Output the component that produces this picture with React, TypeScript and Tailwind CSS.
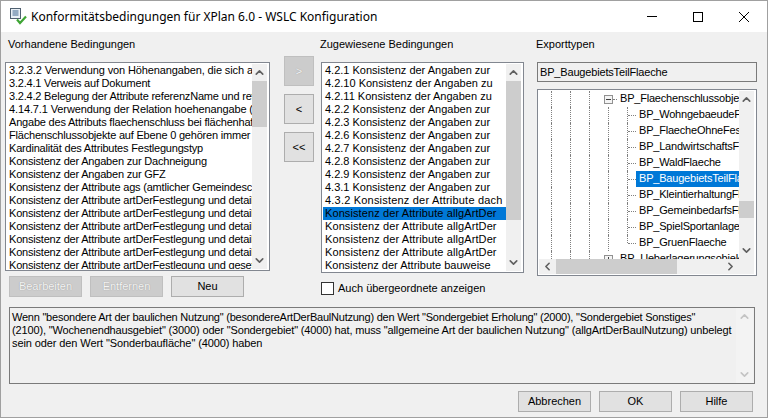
import { ChevronUp, ChevronDown, ChevronLeft, ChevronRight } from "lucide-react";

const vorhanden = [
  "3.2.3.2 Verwendung von Höhenangaben, die sich auf",
  "3.2.4.1 Verweis auf Dokument",
  "3.2.4.2 Belegung der Attribute referenzName und refer",
  "4.14.7.1 Verwendung der Relation hoehenangabe (bei",
  "Angabe des Attributs flaechenschluss bei flächenhaften",
  "Flächenschlussobjekte auf Ebene 0 gehören immer zum",
  "Kardinalität des Attributes Festlegungstyp",
  "Konsistenz der Angaben zur Dachneigung",
  "Konsistenz der Angaben zur GFZ",
  "Konsistenz der Attribute ags (amtlicher Gemeindeschlüssel)",
  "Konsistenz der Attribute artDerFestlegung und detailliert",
  "Konsistenz der Attribute artDerFestlegung und detailliert",
  "Konsistenz der Attribute artDerFestlegung und detailliert",
  "Konsistenz der Attribute artDerFestlegung und detailliert",
  "Konsistenz der Attribute artDerFestlegung und detailliert",
  "Konsistenz der Attribute artDerFestlegung und gesetzlich",
];

const zugewiesen = [
  "4.2.1 Konsistenz der Angaben zur",
  "4.2.10 Konsistenz der Angaben zu",
  "4.2.11 Konsistenz der Angaben zu",
  "4.2.2 Konsistenz der Angaben zur",
  "4.2.3 Konsistenz der Angaben zur",
  "4.2.6 Konsistenz der Angaben zur",
  "4.2.7 Konsistenz der Angaben zur",
  "4.2.8 Konsistenz der Angaben zur",
  "4.2.9 Konsistenz der Angaben zur",
  "4.3.1 Konsistenz der Angaben zur",
  "4.3.2 Konsistenz der Attribute dach",
  "Konsistenz der Attribute allgArtDer",
  "Konsistenz der Attribute allgArtDer",
  "Konsistenz der Attribute allgArtDer",
  "Konsistenz der Attribute allgArtDer",
  "Konsistenz der Attribute bauweise",
];

const kinder = [
  "BP_WohngebaeudeFlaeche",
  "BP_FlaecheOhneFestsetzung",
  "BP_LandwirtschaftsFlaeche",
  "BP_WaldFlaeche",
  "BP_BaugebietsTeilFlaeche",
  "BP_KleintierhaltungFlaeche",
  "BP_GemeinbedarfsFlaeche",
  "BP_SpielSportanlagenFlaeche",
  "BP_GruenFlaeche",
];

const Guides = () => (
  <>
    <div className="w-[19px] h-full shrink-0 border-l border-dotted border-[#808080]" />
    <div className="w-[19px] h-full shrink-0 border-l border-dotted border-[#808080]" />
    <div className="w-[19px] h-full shrink-0 border-l border-dotted border-[#808080]" />
  </>
);

const Expander = ({ open }: { open: boolean }) => (
  <svg width="9" height="9" viewBox="0 0 9 9" className="shrink-0 bg-white">
    <rect x="0.5" y="0.5" width="8" height="8" fill="#f4f4f4" stroke="#919191" />
    <path d={open ? "M2 4.5H7" : "M2 4.5H7M4.5 2V7"} stroke="#404040" />
  </svg>
);

const VScroll = ({ top = "", height }: { top?: string; height: string }) => (
  <div className="w-[15px] shrink-0 flex flex-col items-center bg-[#f0f0f0] text-[#606060]">
    <ChevronUp className="h-[17px] w-[13px] shrink-0" strokeWidth={3} />
    <div className={`w-full flex-1 min-h-0 ${top}`}>
      <div className={`w-full bg-[#cdcdcd] ${height}`} />
    </div>
    <ChevronDown className="h-[17px] w-[13px] shrink-0" strokeWidth={3} />
  </div>
);

const Btn = ({ label, disabled, className = "" }: { label: string; disabled?: boolean; className?: string }) => (
  <div
    className={`flex items-center justify-center border ${
      disabled ? "bg-[#cccccc] border-[#bfbfbf] text-[#f4f4f4] [text-shadow:0_0_1px_#8a8a8a]" : "bg-[#e1e1e1] border-[#adadad] text-black"
    } ${className}`}
  >
    {label}
  </div>
);

export default function App() {
  return (
    <div
      className="w-[768px] h-[418px] flex flex-col overflow-hidden bg-[#f0f0f0] border border-[#a0a0a0] text-[11px] leading-[13px] text-black"
      style={{ fontFamily: '"Liberation Sans", Arial, sans-serif' }}
    >
      {/* title bar */}
      <div className="h-[31px] shrink-0 bg-white flex items-center pl-[9px]">
        <svg width="17" height="17" viewBox="0 0 17 17" className="shrink-0 mt-[-1px]">
          <rect x="0.5" y="0.5" width="10" height="10" fill="#eaf0f6" stroke="#4f6070" />
          <path d="M2.5 3H8.5M2.5 5H8.5M2.5 7H8.5" stroke="#3f668f" />
          <path d="M7 11.5L10 15L16 8.5" fill="none" stroke="#3fa535" strokeWidth="2.2" />
        </svg>
        <span className="ml-[4px] text-[12px] text-black" style={{ fontFamily: '"Noto Sans", "Open Sans", sans-serif' }}>
          Konformitätsbedingungen für XPlan 6.0 - WSLC Konfiguration
        </span>
        <div className="ml-auto flex items-center h-full">
          <div className="w-[46px] h-full flex items-center justify-center">
            <div className="w-[10px] h-px bg-black" />
          </div>
          <div className="w-[46px] h-full flex items-center justify-center">
            <div className="w-[10px] h-[10px] border border-black" />
          </div>
          <div className="w-[46px] h-full flex items-center justify-center">
            <svg width="10" height="10" viewBox="0 0 10 10">
              <path d="M0 0L10 10M10 0L0 10" stroke="#000" fill="none" />
            </svg>
          </div>
        </div>
      </div>

      {/* main columns */}
      <div className="flex pt-[6px]">
        <div className="w-[282px] shrink-0 pl-[4px] flex flex-col">
          <div className="h-[13px] pl-[3px] mb-[11px]">Vorhandene Bedingungen</div>
          <div className="w-[265px] h-[209px] flex border border-[#828790] bg-white p-px pr-[2px] overflow-hidden">
            <div className="flex-1 min-w-0 overflow-hidden pl-[2px]">
              {vorhanden.map((t, i) => (
                <div key={i} className={`h-[13px] whitespace-nowrap ${i === 0 || i === 3 ? "tracking-[-0.12px]" : "tracking-[-0.2px]"}`}>
                  {t}
                </div>
              ))}
            </div>
            <VScroll height="h-[46px]" />
          </div>
          <div className="flex gap-[8px] pl-[4px] mt-[5px]">
            <Btn label="Bearbeiten" disabled className="w-[73px] h-[21px]" />
            <Btn label="Entfernen" disabled className="w-[73px] h-[21px]" />
            <Btn label="Neu" className="w-[73px] h-[21px]" />
          </div>
        </div>

        <div className="w-[38px] shrink-0 pl-px pt-[18px] flex flex-col gap-[8px]">
          <Btn label=">" disabled className="w-[30px] h-[30px]" />
          <Btn label="<" className="w-[30px] h-[30px]" />
          <Btn label="<<" className="w-[30px] h-[30px]" />
        </div>

        <div className="w-[216px] shrink-0 flex flex-col">
          <div className="h-[13px] mb-[11px] -ml-px">Zugewiesene Bedingungen</div>
          <div className="w-[203px] h-[211px] flex border border-[#828790] bg-white p-px pr-[2px] overflow-hidden">
            <div className="flex-1 min-w-0 overflow-hidden">
              {zugewiesen.map((t, i) => (
                <div
                  key={i}
                  className={`h-[13px] whitespace-nowrap pl-[2px] ${i === 11 ? "bg-[#0078d7]" : ""} ${i === 10 ? "tracking-[0.2px]" : ""} ${
                    i >= 11 && i <= 14 ? "tracking-[0.1px]" : ""
                  }`}
                >
                  {t}
                </div>
              ))}
            </div>
            <VScroll height="h-[139px]" />
          </div>
          <label className="flex items-center mt-[8px]">
            <span className="w-[13px] h-[13px] border border-[#333333] bg-white shrink-0" />
            <span className="ml-[4px] mt-px">Auch übergeordnete anzeigen</span>
          </label>
        </div>

        <div className="w-[220px] shrink-0 flex flex-col">
          <div className="h-[13px] mb-[11px] -ml-px">Exporttypen</div>
          <div className="h-[20px] border border-[#7a7a7a] bg-[#f0f0f0] flex items-center pl-[2px] tracking-[-0.17px]">BP_BaugebietsTeilFlaeche</div>
          <div className="h-[187px] mt-[7px] border border-[#828790] bg-white flex flex-col p-px overflow-hidden">
            <div className="flex flex-1 min-h-0">
              <div className="flex-1 min-w-0 overflow-hidden pl-[12px] tracking-[-0.2px]">
                <div className="h-[16px] flex items-center whitespace-nowrap">
                  <Guides />
                  <div className="flex items-center -ml-[4px] shrink-0">
                    <Expander open />
                    <div className="w-[4px] border-t border-dotted border-[#808080]" />
                  </div>
                  <span className="ml-[3px] mb-[2px]">BP_Flaechenschlussobjekte</span>
                </div>
                {kinder.map((k, i) => (
                  <div key={k} className="h-[16px] flex items-center whitespace-nowrap">
                    <Guides />
                    <div className="w-[19px] h-full shrink-0 border-l border-dotted border-[#808080]" />
                    <div className={`w-px shrink-0 self-start border-l border-dotted border-[#808080] ${i === 8 ? "h-[8px]" : "h-full"}`} />
                    <div className="w-[8px] shrink-0 border-t border-dotted border-[#808080]" />
                    <span className={`pl-[3px] pr-[3px] pb-[2px] h-full flex items-center ${i === 4 ? "bg-[#0078d7] text-white" : ""}`}>{k}</span>
                  </div>
                ))}
                <div className="h-[16px] flex items-center whitespace-nowrap">
                  <Guides />
                  <div className="flex items-center -ml-[4px] shrink-0">
                    <Expander open={false} />
                    <div className="w-[4px] border-t border-dotted border-[#808080]" />
                  </div>
                  <span className="ml-[3px] mb-[2px]">BP_Ueberlagerungsobjekte</span>
                </div>
              </div>
              <VScroll top="pt-[93px]" height="h-[17px]" />
              <div className="w-px shrink-0" />
            </div>
            <div className="h-[15px] shrink-0 flex items-center bg-[#f0f0f0] text-[#606060] mr-px">
              <ChevronLeft className="w-[17px] h-[13px] shrink-0" strokeWidth={3} />
              <div className="flex-1 h-full">
                <div className="w-[121px] h-full bg-[#cdcdcd]" />
              </div>
              <ChevronRight className="w-[17px] h-[13px] shrink-0 mr-[15px]" strokeWidth={3} />
            </div>
          </div>
        </div>
      </div>

      {/* description */}
      <div className="pl-[8px] mt-[10px]">
        <div className="w-[746px] h-[77px] border border-[#7a7a7a] flex bg-[#f0f0f0]">
          <div className="flex-1 min-w-0 pl-[2px] pt-[3px] whitespace-nowrap">
            <div className="tracking-[-0.23px]">Wenn "besondere Art der baulichen Nutzung" (besondereArtDerBaulNutzung) den Wert "Sondergebiet Erholung" (2000), "Sondergebiet Sonstiges"</div>
            <div className="tracking-[-0.15px]">(2100), "Wochenendhausgebiet" (3000) oder "Sondergebiet" (4000) hat, muss "allgemeine Art der baulichen Nutzung" (allgArtDerBaulNutzung) unbelegt</div>
            <div className="tracking-[-0.1px]">sein oder den Wert "Sonderbaufläche" (4000) haben</div>
          </div>
          <div className="w-[17px] shrink-0 mr-px flex flex-col items-center justify-between text-[#c4c4c4] bg-[#f3f3f3]">
            <ChevronUp className="h-[17px] w-[13px]" strokeWidth={3} />
            <ChevronDown className="h-[17px] w-[13px]" strokeWidth={3} />
          </div>
        </div>
      </div>

      {/* footer */}
      <div className="flex justify-end gap-[8px] pr-[14px] mt-[7px]">
        <Btn label="Abbrechen" className="w-[73px] h-[21px]" />
        <Btn label="OK" className="w-[73px] h-[21px]" />
        <Btn label="Hilfe" className="w-[73px] h-[21px]" />
      </div>
    </div>
  );
}
